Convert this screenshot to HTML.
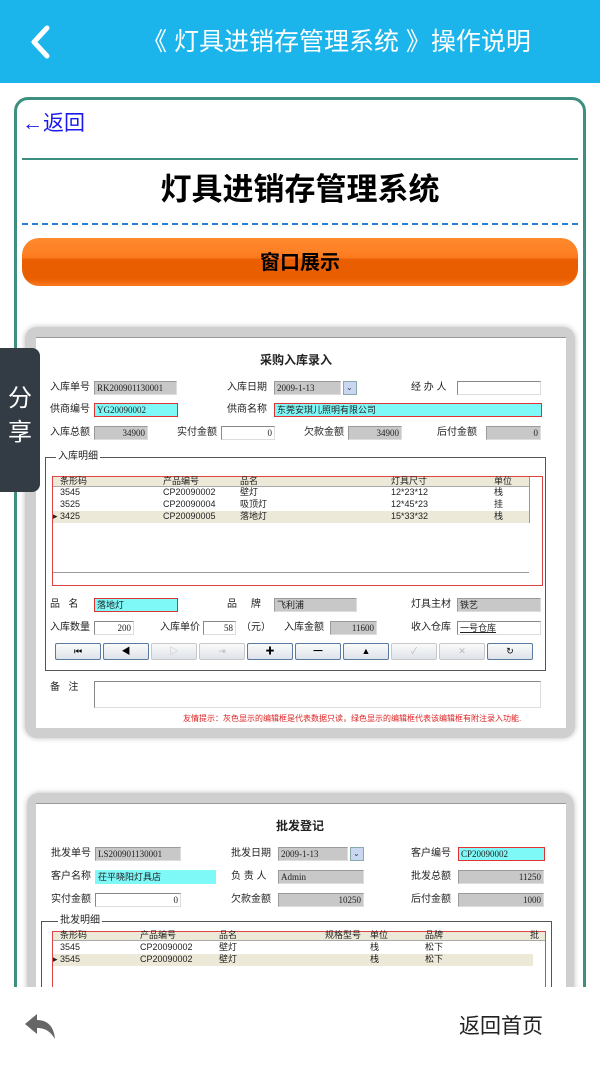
<!DOCTYPE html>
<html style="width:600px;height:1067px;overflow:hidden"><head><meta charset="utf-8"><style>
*{margin:0;padding:0;box-sizing:border-box}
body{width:600px;height:1067px;position:relative;overflow:hidden;background:#fff;font-family:"Liberation Sans","Noto Sans CJK SC",sans-serif}
.a{position:absolute}
.l{position:absolute;font-size:10px;color:#222;line-height:12px;white-space:nowrap;font-family:"Liberation Sans","Noto Sans CJK SC",sans-serif}
.i{position:absolute;height:14px;font-size:9px;line-height:12px;padding:0 2px;white-space:nowrap;font-family:"Liberation Serif","Noto Serif CJK SC",serif;color:#222}
.g{background:#c8c8c8;border:1px solid #9a9a9a;border-right-color:#ddd;border-bottom-color:#ddd}
.w{background:#fff;border:1px solid #888;border-right-color:#ddd;border-bottom-color:#ddd}
.c{background:#7ff8f8;border:1px solid #d33}
.cn{background:#7ff8f8;border:1px solid #7ff8f8}
.r{text-align:right}
.t{position:absolute;font-size:9px;line-height:11px;color:#222;white-space:nowrap}
.btn{position:absolute;top:643px;width:46px;height:17px;background:linear-gradient(#fafafa,#dde3ea);border:1px solid #5a7aa0;border-radius:2px;font-size:9px;text-align:center;line-height:15px;color:#000}
.btn.d{border-color:#c8c8c8;color:#bbb}
</style></head><body>
<!-- header -->
<div class="a" style="left:0;top:0;width:600px;height:83px;background:#1bb5ec"></div>
<svg class="a" style="left:28px;top:24px" width="24" height="36" viewBox="0 0 24 36"><path d="M19 4 L6 18 L19 32" fill="none" stroke="#fff" stroke-width="5" stroke-linecap="round" stroke-linejoin="round"/></svg>
<div class="a" style="left:142px;top:24px;font-size:25px;color:#fff;line-height:36px;white-space:nowrap">《 灯具进销存管理系统 》操作说明</div>

<!-- card -->
<div class="a" style="left:14px;top:97px;width:572px;height:960px;border:3px solid #3d8f80;border-radius:14px"></div>
<div class="a" style="left:22px;top:110px;font-size:21px;color:#1a1aee;line-height:28px">←返回</div>
<div class="a" style="left:22px;top:158px;width:556px;height:2px;background:#3d8f80"></div>
<div class="a" style="left:0;top:170px;width:600px;text-align:center;font-size:31px;font-weight:bold;color:#000;line-height:40px">灯具进销存管理系统</div>
<div class="a" style="left:22px;top:223px;width:556px;border-top:2px dashed #2a7fd8"></div>
<div class="a" style="left:22px;top:238px;width:556px;height:48px;border-radius:17px;background:linear-gradient(#ff8a2e 0%,#fd7c20 40%,#ea5e02 45%,#ea5e02 85%,#fb7a1e 100%)"></div>
<div class="a" style="left:0;top:248px;width:600px;text-align:center;font-size:20px;font-weight:bold;color:#000;line-height:30px">窗口展示</div>

<!-- screenshot 1 -->
<div class="a" style="left:25px;top:327px;width:550px;height:411px;background:#cfcfcf;border-radius:12px;box-shadow:0 0 6px #bbb"></div>
<div class="a" style="left:36px;top:337px;width:530px;height:391px;background:#fff;border-top:1px solid #999"></div>
<div class="l" style="left:236px;top:354px;width:120px;text-align:center;font-size:12px;font-weight:bold">采购入库录入</div>
<div class="l" style="left:50px;top:382px">入库单号</div><div class="i g" style="left:94px;top:381px;width:83px">RK200901130001</div>
<div class="l" style="left:227px;top:382px">入库日期</div><div class="i g" style="left:274px;top:381px;width:67px">2009-1-13</div><div class="i" style="left:343px;top:381px;width:14px;background:#c9d8f0;border:1px solid #8aa;color:#335;font-size:8px">⌄</div>
<div class="l" style="left:411px;top:382px">经 办 人</div><div class="i w" style="left:457px;top:381px;width:84px"></div>
<div class="l" style="left:50px;top:404px">供商编号</div><div class="i c" style="left:94px;top:403px;width:84px">YG20090002</div>
<div class="l" style="left:227px;top:404px">供商名称</div><div class="i c" style="left:274px;top:403px;width:268px;font-family:'Noto Sans CJK SC',sans-serif">东莞安琪儿照明有限公司</div>
<div class="l" style="left:50px;top:427px">入库总额</div><div class="i g r" style="left:94px;top:426px;width:54px">34900</div>
<div class="l" style="left:177px;top:427px">实付金额</div><div class="i w r" style="left:221px;top:426px;width:54px">0</div>
<div class="l" style="left:304px;top:427px">欠款金额</div><div class="i g r" style="left:348px;top:426px;width:54px">34900</div>
<div class="l" style="left:437px;top:427px">后付金额</div><div class="i g r" style="left:486px;top:426px;width:55px">0</div>
<div class="a" style="left:45px;top:457px;width:501px;height:214px;border:1px solid #555"></div>
<div class="l" style="left:56px;top:451px;background:#fff;padding:0 2px">入库明细</div>
<div class="a" style="left:52px;top:476px;width:491px;height:110px;border:1px solid #d44"></div>
<div class="a" style="left:53px;top:477px;width:476px;height:10px;background:#ece9d8;border-bottom:1px solid #aaa"></div>
<div class="a" style="left:53px;top:511px;width:476px;height:12px;background:#ece9d8"></div>
<div class="a" style="left:53px;top:572px;width:476px;height:1px;background:#999"></div>
<div class="a" style="left:529px;top:477px;width:1px;height:46px;background:#999"></div>
<div class="t" style="left:60px;top:476px">条形码</div><div class="t" style="left:163px;top:476px">产品编号</div><div class="t" style="left:240px;top:476px">品名</div><div class="t" style="left:391px;top:476px">灯具尺寸</div><div class="t" style="left:494px;top:476px">单位</div>
<div class="t" style="left:60px;top:487px">3545</div><div class="t" style="left:163px;top:487px">CP20090002</div><div class="t" style="left:240px;top:487px">壁灯</div><div class="t" style="left:391px;top:487px">12*23*12</div><div class="t" style="left:494px;top:487px">栈</div>
<div class="t" style="left:60px;top:499px">3525</div><div class="t" style="left:163px;top:499px">CP20090004</div><div class="t" style="left:240px;top:499px">吸顶灯</div><div class="t" style="left:391px;top:499px">12*45*23</div><div class="t" style="left:494px;top:499px">挂</div>
<div class="t" style="left:53px;top:511px">▸</div><div class="t" style="left:60px;top:511px">3425</div><div class="t" style="left:163px;top:511px">CP20090005</div><div class="t" style="left:240px;top:511px">落地灯</div><div class="t" style="left:391px;top:511px">15*33*32</div><div class="t" style="left:494px;top:511px">栈</div>
<div class="l" style="left:50px;top:599px">品 &nbsp; 名</div><div class="i c" style="left:94px;top:598px;width:84px;font-family:'Noto Sans CJK SC',sans-serif">落地灯</div>
<div class="l" style="left:227px;top:599px">品 &nbsp; &nbsp; 牌</div><div class="i g" style="left:274px;top:598px;width:83px;font-family:'Noto Sans CJK SC',sans-serif">飞利浦</div>
<div class="l" style="left:411px;top:599px">灯具主材</div><div class="i g" style="left:457px;top:598px;width:84px;font-family:'Noto Sans CJK SC',sans-serif">铁艺</div>
<div class="l" style="left:50px;top:622px">入库数量</div><div class="i w r" style="left:94px;top:621px;width:40px">200</div>
<div class="l" style="left:160px;top:622px">入库单价</div><div class="i w r" style="left:203px;top:621px;width:33px">58</div><div class="l" style="left:241px;top:622px">（元）</div>
<div class="l" style="left:284px;top:622px">入库金额</div><div class="i g r" style="left:330px;top:621px;width:47px">11600</div>
<div class="l" style="left:411px;top:622px">收入仓库</div><div class="i w" style="left:457px;top:621px;width:84px;font-family:'Noto Sans CJK SC',sans-serif;text-decoration:underline">一号仓库</div>
<div class="btn" style="left:55px">⏮</div><div class="btn" style="left:103px">◀</div><div class="btn d" style="left:151px">▷</div><div class="btn d" style="left:199px">⇥</div><div class="btn" style="left:247px">✚</div><div class="btn" style="left:295px">━</div><div class="btn" style="left:343px">▲</div><div class="btn d" style="left:391px">✓</div><div class="btn d" style="left:439px">✕</div><div class="btn" style="left:487px">↻</div>
<div class="l" style="left:50px;top:682px">备 &nbsp; 注</div>
<div class="a" style="left:94px;top:681px;width:447px;height:27px;border:1px solid #888;border-right-color:#ddd;border-bottom-color:#ddd"></div>
<div class="l" style="left:183px;top:713px;font-size:8px;color:#d22">友情提示：灰色显示的编辑框是代表数据只读，绿色显示的编辑框代表该编辑框有附注录入功能.</div>

<!-- share tab -->
<div class="a" style="left:0;top:348px;width:40px;height:144px;background:#333c44;border-radius:0 8px 8px 0"></div>
<div class="a" style="left:8px;top:382px;width:26px;font-size:24px;color:#fff;line-height:34px">分享</div>

<!-- screenshot 2 -->
<div class="a" style="left:27px;top:793px;width:547px;height:240px;background:#cfcfcf;border-radius:12px 12px 0 0;box-shadow:0 0 6px #bbb"></div>
<div class="a" style="left:36px;top:803px;width:530px;height:230px;background:#fff;border-top:1px solid #999"></div>
<div class="l" style="left:250px;top:820px;width:100px;text-align:center;font-size:12px;font-weight:bold">批发登记</div>
<div class="l" style="left:51px;top:848px">批发单号</div><div class="i g" style="left:95px;top:847px;width:86px">LS200901130001</div>
<div class="l" style="left:231px;top:848px">批发日期</div><div class="i g" style="left:278px;top:847px;width:70px">2009-1-13</div><div class="i" style="left:350px;top:847px;width:14px;background:#c9d8f0;border:1px solid #8aa;color:#335;font-size:8px">⌄</div>
<div class="l" style="left:411px;top:848px">客户编号</div><div class="i c" style="left:458px;top:847px;width:87px">CP20090002</div>
<div class="l" style="left:51px;top:871px">客户名称</div><div class="i cn" style="left:95px;top:870px;width:121px;font-family:'Noto Sans CJK SC',sans-serif">茌平晓阳灯具店</div>
<div class="l" style="left:231px;top:871px">负 责 人</div><div class="i g" style="left:278px;top:870px;width:86px">Admin</div>
<div class="l" style="left:411px;top:871px">批发总额</div><div class="i g r" style="left:458px;top:870px;width:86px">11250</div>
<div class="l" style="left:51px;top:894px">实付金额</div><div class="i w r" style="left:95px;top:893px;width:86px">0</div>
<div class="l" style="left:231px;top:894px">欠款金额</div><div class="i g r" style="left:278px;top:893px;width:86px">10250</div>
<div class="l" style="left:411px;top:894px">后付金额</div><div class="i g r" style="left:458px;top:893px;width:86px">1000</div>
<div class="a" style="left:41px;top:921px;width:511px;height:100px;border:1px solid #555"></div>
<div class="l" style="left:58px;top:915px;background:#fff;padding:0 2px">批发明细</div>
<div class="a" style="left:52px;top:931px;width:494px;height:80px;border:1px solid #d44"></div>
<div class="a" style="left:53px;top:932px;width:492px;height:9px;background:#ece9d8;border-bottom:1px solid #aaa"></div>
<div class="a" style="left:53px;top:954px;width:480px;height:12px;background:#ece9d8"></div>
<div class="t" style="left:60px;top:930px">条形码</div><div class="t" style="left:140px;top:930px">产品编号</div><div class="t" style="left:219px;top:930px">品名</div><div class="t" style="left:325px;top:930px">规格型号</div><div class="t" style="left:370px;top:930px">单位</div><div class="t" style="left:425px;top:930px">品牌</div><div class="t" style="left:530px;top:930px">批</div>
<div class="t" style="left:60px;top:942px">3545</div><div class="t" style="left:140px;top:942px">CP20090002</div><div class="t" style="left:219px;top:942px">壁灯</div><div class="t" style="left:370px;top:942px">栈</div><div class="t" style="left:425px;top:942px">松下</div>
<div class="t" style="left:53px;top:954px">▸</div><div class="t" style="left:60px;top:954px">3545</div><div class="t" style="left:140px;top:954px">CP20090002</div><div class="t" style="left:219px;top:954px">壁灯</div><div class="t" style="left:370px;top:954px">栈</div><div class="t" style="left:425px;top:954px">松下</div>

<!-- bottom bar -->
<div class="a" style="left:0;top:987px;width:600px;height:80px;background:#fff"></div>
<svg class="a" style="left:24px;top:1013px" width="32" height="28" viewBox="0 0 32 28"><path d="M1 11 L13 1 L13 7 C24 7 30 14 31 26 C26 18 21 15 13 15 L13 21 Z" fill="#666"/></svg>
<div class="a" style="left:459px;top:1012px;font-size:21px;color:#222;line-height:30px">返回首页</div>
</body></html>
